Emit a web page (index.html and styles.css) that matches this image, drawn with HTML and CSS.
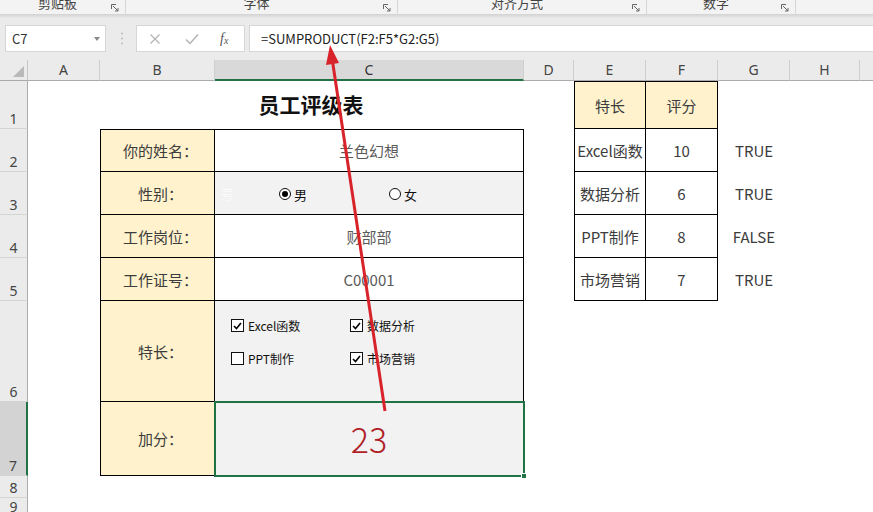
FILE: index.html
```html
<!DOCTYPE html>
<html lang="zh-CN">
<head>
<meta charset="utf-8">
<title>员工评级表</title>
<link rel="stylesheet" href="styles.css">
</head>
<body>
<div class="app">
  <div class="ribbon">
    <div class="grp g1"><span class="glabel">剪贴板</span><svg class="launch" width="8" height="8" viewBox="0 0 8 8"><path d="M0.5 5V0.5H5" fill="none" stroke="#666" stroke-width="1"/><path d="M2 2L7 7M7 4V7H4" fill="none" stroke="#666" stroke-width="1"/></svg></div>
    <div class="grp g2"><span class="glabel">字体</span><svg class="launch" width="8" height="8" viewBox="0 0 8 8"><path d="M0.5 5V0.5H5" fill="none" stroke="#666" stroke-width="1"/><path d="M2 2L7 7M7 4V7H4" fill="none" stroke="#666" stroke-width="1"/></svg></div>
    <div class="grp g3"><span class="glabel">对齐方式</span><svg class="launch" width="8" height="8" viewBox="0 0 8 8"><path d="M0.5 5V0.5H5" fill="none" stroke="#666" stroke-width="1"/><path d="M2 2L7 7M7 4V7H4" fill="none" stroke="#666" stroke-width="1"/></svg></div>
    <div class="grp g4"><span class="glabel">数字</span><svg class="launch" width="8" height="8" viewBox="0 0 8 8"><path d="M0.5 5V0.5H5" fill="none" stroke="#666" stroke-width="1"/><path d="M2 2L7 7M7 4V7H4" fill="none" stroke="#666" stroke-width="1"/></svg></div>
  </div>
  <div class="shadow"></div>
  <div class="fbar">
    <div class="namebox"><span>C7</span><i class="drop"></i></div>
    <svg class="dots" width="4" height="13" viewBox="0 0 4 13"><circle cx="2" cy="1.5" r="1" fill="#bbb"/><circle cx="2" cy="6.5" r="1" fill="#bbb"/><circle cx="2" cy="11.5" r="1" fill="#bbb"/></svg>
    <div class="btns">
      <svg width="12" height="12" viewBox="0 0 12 12"><path d="M1.5 1.5L10.5 10.5M10.5 1.5L1.5 10.5" stroke="#b4b4b4" stroke-width="1.3"/></svg>
      <svg width="14" height="12" viewBox="0 0 14 12"><path d="M1 6.5L5 10.5L13 1.5" fill="none" stroke="#b4b4b4" stroke-width="1.5"/></svg>
      <span class="fx">f<sub>x</sub></span>
    </div>
    <div class="formula">=SUMPRODUCT(F2:F5*G2:G5)</div>
  </div>

  <div class="sheet">
    <div class="corner"><i class="tri"></i></div>
    <div class="ch">A</div>
    <div class="ch">B</div>
    <div class="ch sel">C</div>
    <div class="ch">D</div>
    <div class="ch">E</div>
    <div class="ch">F</div>
    <div class="ch">G</div>
    <div class="ch">H</div>
    <div class="ch last"></div>

    <div class="rh r1">1</div>
    <div class="rh r2">2</div>
    <div class="rh r3">3</div>
    <div class="rh r4">4</div>
    <div class="rh r5">5</div>
    <div class="rh r6">6</div>
    <div class="rh r7 sel">7</div>
    <div class="rh r8">8</div>
    <div class="rh r9">9</div>

    <div class="title">员工评级表</div>

    <div class="cell lab bd bl bt rr2">你的姓名：</div>
    <div class="cell val bd bt rr2">兰色幻想</div>

    <div class="cell lab bd bl rr3">性别：</div>
    <div class="cell val gray bd rr3 radios">
      <span class="ghost">号</span>
      <span class="radio on"></span><span class="rlab">男</span>
      <span class="radio r2"></span><span class="rlab">女</span>
    </div>

    <div class="cell lab bd bl rr4">工作岗位：</div>
    <div class="cell val bd rr4">财部部</div>

    <div class="cell lab bd bl rr5">工作证号：</div>
    <div class="cell val bd rr5">C00001</div>

    <div class="cell lab bd bl rr6">特长：</div>
    <div class="cell gray bd rr6 checks">
      <div class="chk"><span class="box on"><svg width="9" height="8" viewBox="0 0 9 8"><path d="M1 4L3.5 6.5L8 1" fill="none" stroke="#000" stroke-width="1.6"/></svg></span>Excel函数</div>
      <div class="chk"><span class="box on"><svg width="9" height="8" viewBox="0 0 9 8"><path d="M1 4L3.5 6.5L8 1" fill="none" stroke="#000" stroke-width="1.6"/></svg></span>数据分析</div>
      <div class="chk"><span class="box"></span>PPT制作</div>
      <div class="chk"><span class="box on"><svg width="9" height="8" viewBox="0 0 9 8"><path d="M1 4L3.5 6.5L8 1" fill="none" stroke="#000" stroke-width="1.6"/></svg></span>市场营销</div>
    </div>

    <div class="cell lab bd bl rr7">加分：</div>
    <div class="cell gray bd rr7 result">23<span class="selbox"></span><span class="handle"></span></div>

    <div class="cell hd bd bl bt ce rr1">特长</div>
    <div class="cell hd bd bt cf rr1">评分</div>

    <div class="cell tv bd bl ce rr2">Excel函数</div>
    <div class="cell tv bd cf rr2">10</div>
    <div class="cell tv cg rr2">TRUE</div>

    <div class="cell tv bd bl ce rr3">数据分析</div>
    <div class="cell tv bd cf rr3">6</div>
    <div class="cell tv cg rr3">TRUE</div>

    <div class="cell tv bd bl ce rr4">PPT制作</div>
    <div class="cell tv bd cf rr4">8</div>
    <div class="cell tv cg rr4">FALSE</div>

    <div class="cell tv bd bl ce rr5">市场营销</div>
    <div class="cell tv bd cf rr5">7</div>
    <div class="cell tv cg rr5">TRUE</div>
  </div>

  <svg class="arrow" width="873" height="512" viewBox="0 0 873 512">
    <line x1="385" y1="411" x2="332.6" y2="62" stroke="#d8232b" stroke-width="3"/>
    <polygon points="330,45 339,63 326,65" fill="#d8232b"/>
  </svg>
</div>
</body>
</html>
```

FILE: styles.css
```css
* { box-sizing: border-box; }
html, body { margin: 0; padding: 0; }
body {
  width: 873px;
  height: 512px;
  overflow: hidden;
  background: #fff;
  font-family: "Noto Sans CJK SC", "Noto Sans", sans-serif;
  color: #333;
}
.app { position: relative; width: 873px; height: 512px; overflow: hidden; }

/* ribbon */
.ribbon {
  height: 14px;
  background: #f3f3f3;
  display: flex;
  overflow: hidden;
}
.grp {
  display: flex;
  align-items: flex-start;
  border-right: 1px solid #d6d6d6;
  height: 14px;
  padding-right: 6px;
}
.g1 { width: 126px; }
.g2 { width: 272px; }
.g3 { width: 249px; }
.g4 { width: 149px; }
.glabel {
  flex: 1;
  text-align: center;
  font-size: 13px;
  line-height: 13px;
  margin-top: -4px;
  color: #444;
  padding-left: 4px;
}
.launch { margin-top: 4px; }
.shadow {
  height: 4px;
  background: linear-gradient(#d2d2d2, #e9e9e9);
}

/* formula bar */
.fbar {
  height: 42px;
  background: #ebebeb;
  display: flex;
  align-items: flex-start;
  padding-top: 7px;
  padding-left: 5px;
}
.namebox {
  width: 101px;
  height: 27px;
  background: #fff;
  border: 1px solid #d6d6d6;
  display: flex;
  align-items: center;
  justify-content: space-between;
  padding: 0 5px 0 6px;
  font-size: 13px;
  color: #333;
}
.drop {
  width: 0; height: 0;
  border-left: 3.5px solid transparent;
  border-right: 3.5px solid transparent;
  border-top: 4px solid #888;
}
.dots { margin: 7px 0 0 14px; }
.btns {
  margin-left: 12px;
  width: 109px;
  height: 27px;
  background: #fff;
  border: 1px solid #d6d6d6;
  display: flex;
  align-items: center;
  padding-left: 12px;
  gap: 24px;
}
.fx {
  font-family: "Liberation Serif", "DejaVu Serif", serif;
  font-style: italic;
  font-size: 14px;
  color: #555;
  margin-left: -3px;
}
.fx sub { font-size: 10px; vertical-align: -1px; }
.formula {
  margin-left: 4px;
  flex: 1;
  height: 27px;
  background: #fff;
  border: 1px solid #d6d6d6;
  border-right: none;
  font-size: 13px;
  line-height: 25px;
  padding-left: 11px;
  color: #222;
}

/* sheet */
.sheet {
  height: 452px;
  display: grid;
  grid-template-columns: 28px 72px 115px 309px 50px 72px 72px 72px 70px 1fr;
  grid-template-rows: 21px 48px 43px 43px 43px 43px 101px 74px 22px 1fr;
}
.corner {
  grid-row: 1; grid-column: 1;
  background: #ebebeb;
  border-right: 1px solid #c6c6c6;
  border-bottom: 1px solid #ababab;
  position: relative;
}
.tri {
  position: absolute;
  right: 3px; bottom: 3px;
  width: 0; height: 0;
  border-left: 11px solid transparent;
  border-bottom: 11px solid #b9b9b9;
}
.ch {
  grid-row: 1;
  background: #ebebeb;
  border-right: 1px solid #cfcfcf;
  border-bottom: 1px solid #ababab;
  font-family: "Noto Sans", sans-serif;
  font-size: 14px;
  color: #444;
  text-align: center;
  line-height: 20px;
}
.ch.sel {
  background: #d9d9d9;
  border-bottom: 2px solid #217346;
  color: #333;
}
.ch.last { border-right: none; }
.rh {
  grid-column: 1;
  background: #ebebeb;
  border-right: 1px solid #ababab;
  border-bottom: 1px solid #d4d4d4;
  font-family: "Noto Sans", sans-serif;
  font-size: 14px;
  color: #444;
  display: flex;
  align-items: flex-end;
  justify-content: center;
  line-height: 18px;
  padding-bottom: 0;
}
.rh.sel {
  background: #d3d3d3;
  border-right: 2px solid #217346;
}
.r1 { grid-row: 2; } .r2 { grid-row: 3; } .r3 { grid-row: 4; }
.r4 { grid-row: 5; } .r5 { grid-row: 6; } .r6 { grid-row: 7; }
.r7 { grid-row: 8; } .r8 { grid-row: 9; } .r9 { grid-row: 10; }

.title {
  grid-row: 2;
  grid-column: 3 / 5;
  display: flex;
  align-items: center;
  justify-content: center;
  font-size: 21px;
  font-weight: bold;
  color: #111;
  padding-bottom: 3px;
  padding-right: 2px;
}

.cell {
  display: flex;
  align-items: center;
  justify-content: center;
  font-size: 15px;
  position: relative;
}
.bd { border-right: 1px solid #000; border-bottom: 1px solid #000; }
.bl { border-left: 1px solid #000; }
.bt { border-top: 1px solid #000; }

.lab { grid-column: 3; background: #fff2cc; color: #3c3c3c; padding-left: 6px; }
.val { grid-column: 4; color: #5a5a5a; }
.gray { grid-column: 4; background: #f2f2f2; }

.rr1 { grid-row: 2; } .rr2 { grid-row: 3; } .rr3 { grid-row: 4; }
.rr4 { grid-row: 5; } .rr5 { grid-row: 6; } .rr6 { grid-row: 7; }
.rr7 { grid-row: 8; }

.ce { grid-column: 6; }
.cf { grid-column: 7; }
.cg { grid-column: 8; }
.hd { background: #fff2cc; color: #3c3c3c; }
.tv { color: #3c3c3c; }

/* radios */
.radios { justify-content: flex-start; padding-left: 64px; padding-top: 2px; }
.ghost {
  position: absolute;
  left: 6px; top: 12px;
  font-size: 13px;
  color: #fbfbfb;
}
.radio {
  width: 12px; height: 12px;
  border: 1px solid #111;
  border-radius: 50%;
  background: #fff;
  display: inline-flex;
  align-items: center;
  justify-content: center;
}
.radio.on::after {
  content: "";
  width: 6px; height: 6px;
  border-radius: 50%;
  background: #000;
}
.radio.r2 { margin-left: 82px; }
.rlab { font-size: 13px; color: #111; margin-left: 3px; }

/* checkboxes */
.checks {
  display: grid;
  grid-template-columns: 119px 1fr;
  grid-auto-rows: 33px;
  align-content: start;
  justify-content: start;
  padding: 8px 0 0 16px;
}
.chk {
  display: flex;
  align-items: center;
  font-size: 12px;
  color: #111;
  gap: 4px;
}
.box {
  width: 13px; height: 13px;
  border: 1px solid #111;
  background: #fff;
  display: inline-flex;
  align-items: center;
  justify-content: center;
}

/* result */
.result {
  font-size: 34px;
  color: #b01e28;
  font-weight: 300;
  padding-bottom: 0;
}
.selbox {
  position: absolute;
  left: -1px; top: -1px; right: -2px; bottom: -2px;
  border: 2px solid #217346;
}
.handle {
  position: absolute;
  right: -4px; bottom: -4px;
  width: 6px; height: 6px;
  background: #217346;
  border: 1px solid #fff;
}

.arrow {
  position: absolute;
  left: 0; top: 0;
  pointer-events: none;
}
```
